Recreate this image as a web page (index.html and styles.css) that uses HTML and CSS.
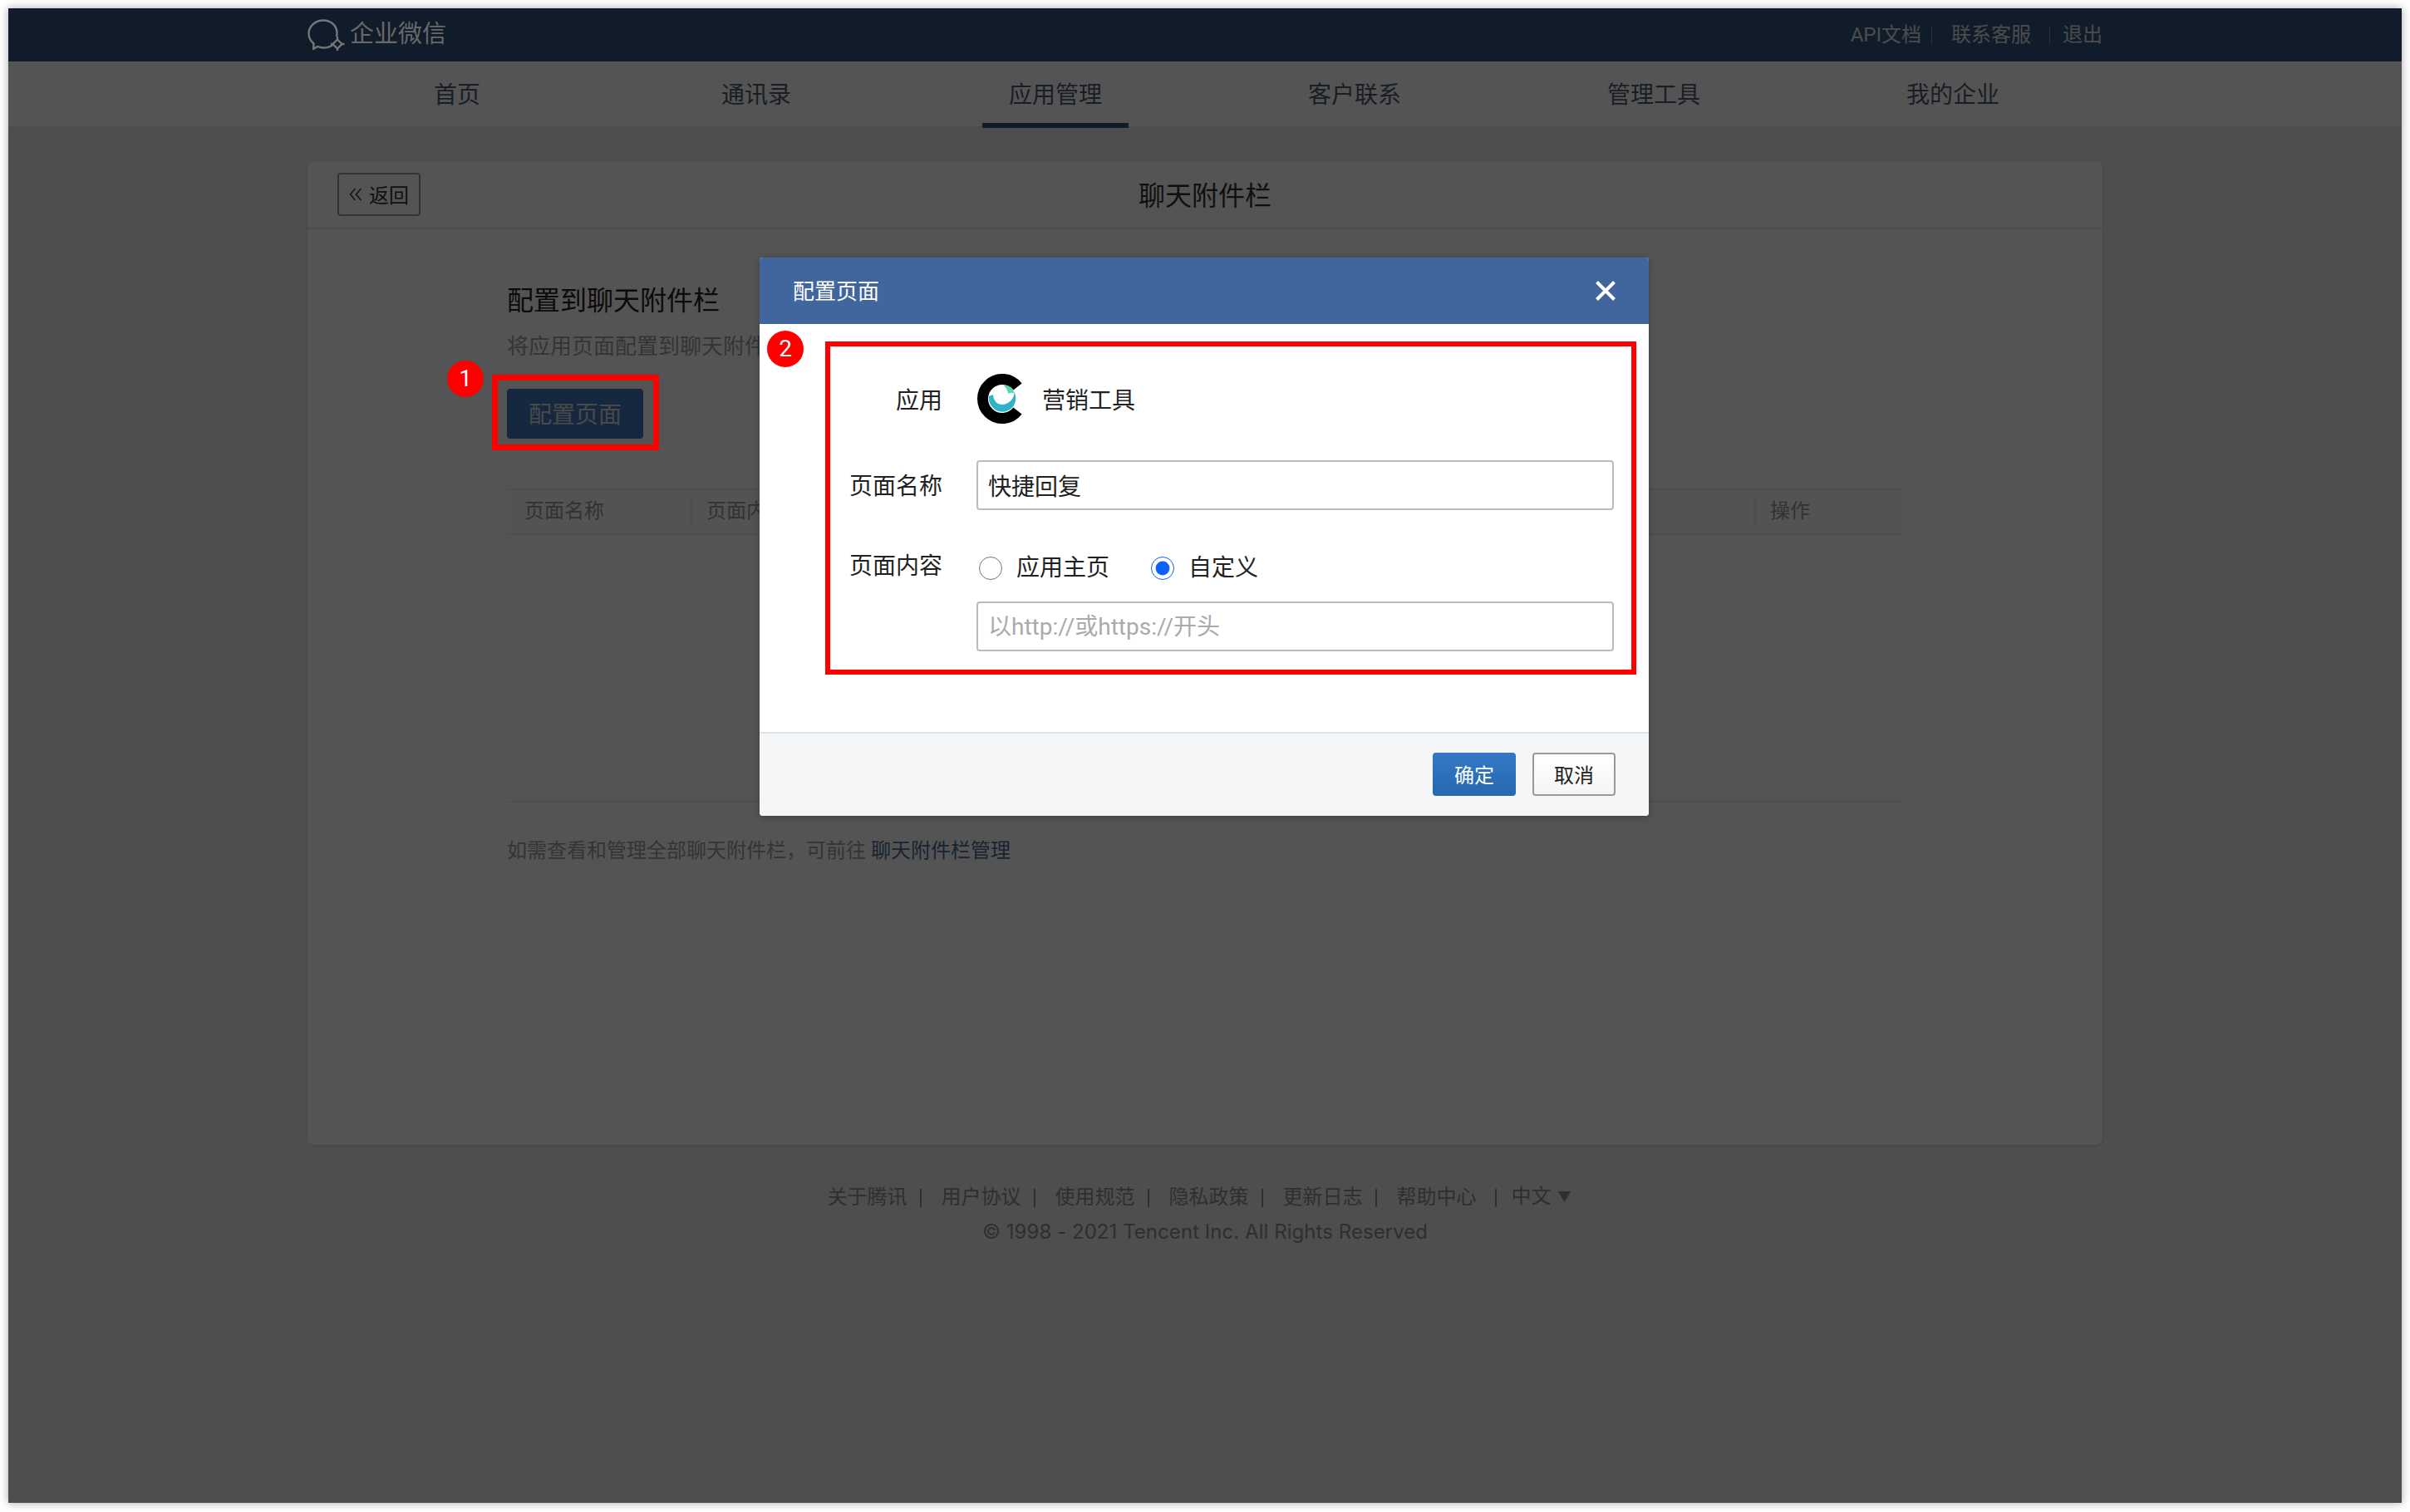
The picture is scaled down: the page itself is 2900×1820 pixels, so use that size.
FILE: index.html
```html
<!DOCTYPE html>
<html lang="zh-CN">
<head>
    <meta charset="UTF-8">
    <title>聊天附件栏</title>
    <link rel="stylesheet" href="styles.css">
</head>
<body>

<div class="window">
    <header class="topbar">
        <div class="topbar-inner">
            <a class="brand" href="#">
                <svg class="brand-icon" viewBox="0 0 46 38" fill="none" stroke="#777" stroke-width="2.400" stroke-linejoin="round">
                    <path d="M30 31.500C27 33.500 23.500 34.500 20 34.500C17 34.500 14.500 34 12 33L7 36L7.500 29.500C3.500 26 1.500 22 1.500 17.500C1.500 8.500 9.500 1.500 19 1.500C28.500 1.500 35.500 8 35.500 17C35.500 18.500 35.300 20 34.800 21"/>
                    <path d="M36 24.500L41.500 30L36 35.500L30.500 30Z"/>
                    <path d="M36 21V24.500M44.500 30H41.500M36 38V35.500M28 30H30.500"/>
                </svg>
                <span>企业微信</span>
            </a>
            <div class="toplinks">
                <a href="#">API文档</a>
                <i></i>
                <a href="#">联系客服</a>
                <i></i>
                <a href="#">退出</a>
            </div>
        </div>
    </header>

    <nav class="mainnav">
        <a href="#">首页</a>
        <a href="#">通讯录</a>
        <a href="#" class="active">应用管理</a>
        <a href="#">客户联系</a>
        <a href="#">管理工具</a>
        <a href="#">我的企业</a>
    </nav>

    <main class="card">
        <div class="card-head">
            <div>
                <a class="back-btn" href="#">
                    <svg class="back-icon" viewBox="0 0 16 16" fill="none" stroke="#333" stroke-width="1.500">
                        <path d="M7.500 1L1.500 8L7.500 15M14.500 1L8.500 8L14.500 15"/>
                    </svg>
                    返回
                </a>
            </div>
            <h2>聊天附件栏</h2>
        </div>
        <div class="card-body">
            <h3>配置到聊天附件栏</h3>
            <p class="desc">将应用页面配置到聊天附件</p>
            <button class="primary-btn">配置页面</button>

            <div class="table">
                <div class="table-head">
                    <div class="col-name">页面名称</div>
                    <div class="col-content">页面内容</div>
                    <div class="col-action">操作</div>
                </div>
                <div class="table-empty"></div>
            </div>

            <p class="foot-note">如需查看和管理全部聊天附件栏，可前往 <a href="#">聊天附件栏管理</a></p>
        </div>
    </main>

    <footer class="footer">
        <div class="footer-links">
            <a href="#">关于腾讯</a><i></i>
            <a href="#">用户协议</a><i></i>
            <a href="#">使用规范</a><i></i>
            <a href="#">隐私政策</a><i></i>
            <a href="#">更新日志</a><i></i>
            <a href="#">帮助中心</a><i class="wide"></i>
            <a href="#">中文<span class="arrow">▼</span></a>
        </div>
        <div class="copyright">© 1998 - 2021 Tencent Inc. All Rights Reserved</div>
    </footer>

    <div class="mask"></div>

    <!-- 弹窗 -->
    <div class="dialog">
        <div class="dialog-head">
            <span>配置页面</span>
            <svg class="close-icon" viewBox="0 0 24 24" stroke="#fff" stroke-width="4">
                <path d="M1.500 1.500L22.500 22.500M22.500 1.500L1.500 22.500"/>
            </svg>
        </div>
        <div class="dialog-body">
            <div class="form-row app-row">
                <label>应用</label>
                <div class="app-info">
                    <svg class="app-logo" viewBox="0 0 60 60" fill="none">
                        <path d="M48.500 15.500A23.500 23.500 0 1 0 48.500 44.500" stroke="#000" stroke-width="13"/>
                        <path d="M14 27C13 37 21 45.700 30 45.700C39 45.700 46.500 39 46.300 29C46.200 26 45.500 24 44.500 22C44.500 30 38 37 29.500 37C23.500 37 19.500 32 19 25Z" fill="#2fb3c9"/>
                        <path d="M31 13C37 13.500 43 17 45 24C42 22 38.500 23 37 24C37 20 34 16 31 13Z" fill="#4fd8b5"/>
                    </svg>
                    <span>营销工具</span>
                </div>
            </div>
            <div class="form-row">
                <label>页面名称</label>
                <input class="text-input" type="text" value="快捷回复">
            </div>
            <div class="form-row radio-row">
                <label>页面内容</label>
                <div class="radios">
                    <label class="radio"><input type="radio" name="content">应用主页</label>
                    <label class="radio"><input type="radio" name="content" checked>自定义</label>
                </div>
            </div>
            <div class="form-row url-row">
                <label></label>
                <input class="text-input" type="text" placeholder="以http://或https://开头">
            </div>
        </div>
        <div class="dialog-foot">
            <button class="ok-btn">确定</button>
            <button class="cancel-btn">取消</button>
        </div>
    </div>

    <!-- 标注 -->
    <div class="mark-box mark-box-1"></div>
    <div class="mark-box mark-box-2"></div>
    <div class="mark-num mark-num-1">1</div>
    <div class="mark-num mark-num-2">2</div>
</div>

</body>
</html>
```

FILE: styles.css
```css
* {
    box-sizing: border-box;
}
body {
    margin: 0;
    background: #fff;
    font-family: Roboto, "Noto Sans CJK SC", sans-serif;
    color: #333;
}
a {
    text-decoration: none;
    color: inherit;
}
.window {
    position: relative;
    width: 2880px;
    height: 1799px;
    margin: 10px;
    background: #e8ecea;
    box-shadow: 0 0 10px rgba(0,0,0,0.35);
    overflow: hidden;
}

/* 顶栏 */
.topbar {
    height: 64px;
    background: #345582;
}
.topbar-inner {
    width: 2160px;
    height: 100%;
    margin: 0 auto;
    display: flex;
    justify-content: space-between;
    align-items: center;
}
.brand {
    position: relative;
    z-index: 1;
    display: flex;
    align-items: center;
    gap: 5px;
    color: #686868;
    font-size: 29px;
    line-height: 40px;
}
.brand span {
    margin-top: -2px;
}
.brand-icon {
    width: 46px;
    height: 38px;
}
.toplinks {
    display: flex;
    align-items: center;
    font-size: 24px;
    line-height: 32px;
    padding-bottom: 1px;
    color: #dfe3e8;
}
.toplinks i {
    width: 1px;
    height: 22px;
    margin: 2px 15px 0 22px;
    background: #8794a6;
}
.toplinks i:first-of-type {
    margin: 2px 23px 0 12px;
}

/* 导航 */
.mainnav {
    height: 80px;
    display: grid;
    grid-template-columns: repeat(6, 360px);
    justify-content: center;
    background: #fff;
    border-bottom: 2px solid #e4e6e8;
}
.mainnav a {
    justify-self: center;
    height: 80px;
    padding: 0 32px;
    font-size: 28px;
    line-height: 81px;
    color: #4d5a70;
}
.mainnav a.active {
    border-bottom: 6px solid #345582;
}

/* 主卡片 */
.card {
    width: 2160px;
    height: 1184px;
    margin: 40px auto 0;
    background: #fff;
    border-radius: 8px;
    box-shadow: 0 1px 4px rgba(0,0,0,0.1);
}
.card-head {
    height: 82px;
    display: grid;
    grid-template-columns: 1fr auto 1fr;
    align-items: center;
    padding: 0 36px;
    border-bottom: 2px solid #e4e6e8;
}
.card-head h2 {
    margin: -3px 0 0;
    font-size: 32px;
    font-weight: 400;
    color: #333;
}
.back-btn {
    display: flex;
    align-items: center;
    justify-content: center;
    gap: 8px;
    width: 100px;
    height: 52px;
    padding-bottom: 2px;
    border: 2px solid #999;
    border-radius: 4px;
    font-size: 24px;
    color: #333;
}
.back-icon {
    width: 16px;
    height: 16px;
    margin-top: 2px;
}
.card-body {
    padding: 64px 240px 0;
}
.card-body h3 {
    margin: 0;
    font-size: 32px;
    line-height: 44px;
    font-weight: 400;
    color: #222;
}
.desc {
    margin: 15px 0 0;
    font-size: 26px;
    line-height: 36px;
    color: #a0a0a0;
    white-space: nowrap;
}
.primary-btn {
    display: block;
    width: 164px;
    height: 60px;
    margin-top: 33px;
    padding-bottom: 3px;
    border: 0;
    border-radius: 4px;
    background: #447ac0;
    color: #ddd;
    font-family: inherit;
    font-size: 28px;
}

/* 表格 */
.table {
    margin-top: 60px;
}
.table-head {
    height: 56px;
    display: flex;
    align-items: center;
    background: #fafbfc;
    border-top: 2px solid #eee;
    border-bottom: 2px solid #eee;
    font-size: 24px;
    color: #999;
}
.table-head div {
    padding-left: 17px;
    padding-bottom: 3px;
    line-height: 34px;
}
.table-head .col-name {
    width: 221px;
    padding-left: 21px;
}
.col-content {
    flex: 1;
    border-left: 2px solid #eee;
}
.col-action {
    width: 179px;
    border-left: 2px solid #eee;
}
.table-empty {
    height: 322px;
    border-bottom: 2px solid #eee;
}
.foot-note {
    margin: 40px 0 0;
    font-size: 24px;
    line-height: 36px;
    color: #a0a0a0;
}
.foot-note a {
    color: #4d6a96;
}

/* 页脚 */
.footer {
    margin-top: 44px;
    font-size: 24px;
    line-height: 36px;
    text-align: center;
    color: #909090;
}
.footer-links {
    display: flex;
    justify-content: center;
    align-items: center;
    padding-right: 14px;
}
.footer-links i {
    width: 2px;
    height: 22px;
    margin: 3px 23px 0 16px;
    background: #909090;
}
.footer-links i.wide {
    margin: 3px 17px 0 23px;
}
.arrow {
    margin-left: 8px;
    font-size: 16px;
    vertical-align: 2px;
}
.copyright {
    margin-top: 6px;
    font-family: Inter, "Noto Sans CJK SC", sans-serif;
    letter-spacing: 0.05px;
}

/* 遮罩和弹窗 */
.mask {
    position: absolute;
    inset: 0;
    background: rgba(0,0,0,0.67);
}
.dialog {
    position: absolute;
    left: 904px;
    top: 300px;
    width: 1070px;
    height: 672px;
    display: flex;
    flex-direction: column;
    background: #fff;
    border-radius: 4px;
    box-shadow: 0 2px 8px rgba(0,0,0,0.25);
    overflow: hidden;
}
.dialog-head {
    height: 80px;
    flex: none;
    display: flex;
    justify-content: space-between;
    align-items: center;
    padding: 0 40px;
    background: #41659d;
    color: #fff;
    font-size: 26px;
}
.dialog-head span {
    margin-top: -3px;
}
.close-icon {
    width: 24px;
    height: 24px;
}
.dialog-body {
    flex: 1;
    padding: 60px 42px 0 0;
}
.form-row {
    display: grid;
    grid-template-columns: 220px 1fr;
    column-gap: 41px;
    align-items: center;
    min-height: 60px;
    margin-bottom: 44px;
    font-size: 28px;
    line-height: 36px;
    color: #222;
}
.form-row > label {
    padding-top: 3px;
    text-align: right;
}
.app-row > label,
.app-info span {
    padding-top: 6px;
}
.app-info {
    display: flex;
    align-items: center;
    gap: 18px;
}
.app-logo {
    width: 60px;
    height: 60px;
    margin-left: 1px;
}
.text-input {
    width: 100%;
    height: 60px;
    padding: 0 12px;
    border: 2px solid #bbb;
    border-radius: 4px;
    font-family: inherit;
    font-size: 28px;
    color: #222;
    outline: none;
}
.text-input::placeholder {
    color: #aaa;
}
.radio-row {
    min-height: 40px;
    margin-top: 50px;
    margin-bottom: 20px;
}
.radio-row > label {
    padding-top: 0;
    padding-bottom: 4px;
}
.url-row {
    margin-bottom: 0;
}
.radios {
    display: flex;
    gap: 47px;
}
.radio {
    display: flex;
    align-items: center;
    gap: 17px;
    line-height: 40px;
}
.radio input {
    width: 28px;
    height: 28px;
    margin: 0 0 0 3px;
    accent-color: #0b62f5;
}
.dialog-foot {
    height: 101px;
    flex: none;
    display: flex;
    justify-content: flex-end;
    gap: 20px;
    padding: 23px 40px 0 0;
    background: #f5f6f7;
    border-top: 2px solid #e0e3e8;
}
.ok-btn,
.cancel-btn {
    width: 100px;
    height: 52px;
    padding-bottom: 3px;
    border-radius: 4px;
    font-family: inherit;
    font-size: 24px;
}
.ok-btn {
    border: 0;
    background: linear-gradient(#3578c7, #2568ae);
    color: #fff;
}
.cancel-btn {
    border: 2px solid #999;
    background: linear-gradient(#fff, #f5f5f5);
    color: #222;
}

/* 标注 */
.mark-box {
    position: absolute;
    border: 6px solid #f00;
}
.mark-box-1 {
    left: 582px;
    top: 441px;
    width: 201px;
    height: 91px;
    border-width: 7px;
}
.mark-box-2 {
    left: 983px;
    top: 401px;
    width: 976px;
    height: 401px;
}
.mark-num {
    position: absolute;
    width: 44px;
    height: 44px;
    border-radius: 50%;
    background: #f00;
    color: #fff;
    font-family: Roboto, sans-serif;
    font-size: 28px;
    line-height: 44px;
    text-align: center;
}
.mark-num-1 {
    left: 528px;
    top: 424px;
}
.mark-num-2 {
    left: 913px;
    top: 388px;
}
```
